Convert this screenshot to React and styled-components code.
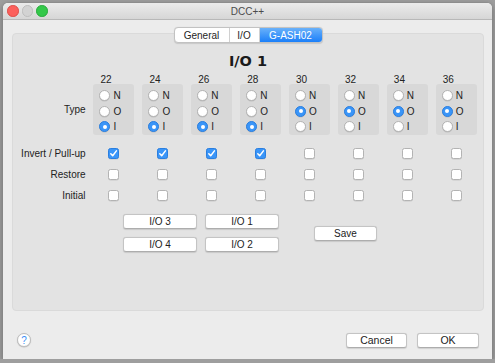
import React from "react";
import styled, { createGlobalStyle } from "styled-components";

const GlobalStyle = createGlobalStyle`
  html, body {
    margin: 0;
    padding: 0;
    background: #9e9e9e;
    font-family: "Liberation Sans", Arial, sans-serif;
    color: #222;
  }
`;

const columns = [
  { pin: 22, type: "I", invert: true },
  { pin: 24, type: "I", invert: true },
  { pin: 26, type: "I", invert: true },
  { pin: 28, type: "I", invert: true },
  { pin: 30, type: "O", invert: false },
  { pin: 32, type: "O", invert: false },
  { pin: 34, type: "O", invert: false },
  { pin: 36, type: "O", invert: false },
];

const App = () => {
  return (
    <>
      <GlobalStyle />
      <Window>
        <TitleBar>
          <Lights>
            <Light $color="#fc605c" $border="#de4a45" />
            <Light $color="#d3d3d3" $border="#bdbdbd" />
            <Light $color="#34c84a" $border="#24a938" />
          </Lights>
          <Title>DCC++</Title>
          <span />
        </TitleBar>

        <Body>
          <TabRow>
            <Segmented>
              <Segment $w={54}>General</Segment>
              <Segment $w={29}>I/O</Segment>
              <Segment $w={62} $active>
                G-ASH02
              </Segment>
            </Segmented>
          </TabRow>

          <GroupBox>
            <Heading>I/O 1</Heading>

            <Row $h={9}>
              <span />
              {columns.map((c) => (
                <PinNumber key={c.pin}>{c.pin}</PinNumber>
              ))}
            </Row>

            <Row $h={51}>
              <Label>Type</Label>
              {columns.map((c) => (
                <RadioBox key={c.pin}>
                  {["N", "O", "I"].map((opt) => (
                    <RadioItem key={opt}>
                      <Radio $on={c.type === opt} />
                      <span>{opt}</span>
                    </RadioItem>
                  ))}
                </RadioBox>
              ))}
            </Row>

            <Row $h={21} $mt={8}>
              <Label>Invert / Pull-up</Label>
              {columns.map((c) => (
                <CheckCell key={c.pin}>
                  <Check $on={c.invert}>
                    {c.invert && (
                      <svg width="9" height="9" viewBox="0 0 9 9">
                        <path
                          d="M1.8 4.8 L3.7 6.8 L7.4 1.9"
                          fill="none"
                          stroke="#fff"
                          strokeWidth="1.5"
                          strokeLinecap="round"
                          strokeLinejoin="round"
                        />
                      </svg>
                    )}
                  </Check>
                </CheckCell>
              ))}
            </Row>

            <Row $h={21}>
              <Label>Restore</Label>
              {columns.map((c) => (
                <CheckCell key={c.pin}>
                  <Check />
                </CheckCell>
              ))}
            </Row>

            <Row $h={21}>
              <Label>Initial</Label>
              {columns.map((c) => (
                <CheckCell key={c.pin}>
                  <Check />
                </CheckCell>
              ))}
            </Row>

            <Actions>
              <ButtonGrid>
                <PushButton $w={74}>I/O 3</PushButton>
                <PushButton $w={74}>I/O 1</PushButton>
                <PushButton $w={74}>I/O 4</PushButton>
                <PushButton $w={74}>I/O 2</PushButton>
              </ButtonGrid>
              <PushButton $w={63}>Save</PushButton>
            </Actions>
          </GroupBox>

          <Footer>
            <HelpButton>?</HelpButton>
            <FooterButtons>
              <PushButton $w={61} $big>
                Cancel
              </PushButton>
              <PushButton $w={62} $big>
                OK
              </PushButton>
            </FooterButtons>
          </Footer>
        </Body>
      </Window>
    </>
  );
};

// Styled Components
const Window = styled.div`
  margin: 3px 0 0 3px;
  width: 489px;
  height: 356px;
  background: #ececec;
  border-radius: 5px 5px 0 0;
  box-shadow: 0 0 0 0.5px #8a8a8a, 0 2px 6px rgba(0, 0, 0, 0.35);
  display: flex;
  flex-direction: column;
  overflow: hidden;
`;

const TitleBar = styled.div`
  height: 16px;
  display: grid;
  grid-template-columns: 1fr auto 1fr;
  align-items: center;
  background: linear-gradient(#ebebeb, #d6d6d6);
  border-bottom: 1px solid #b8b8b8;
`;

const Lights = styled.div`
  display: flex;
  gap: 3px;
  padding-left: 4px;
`;

const Light = styled.span`
  width: 11.5px;
  height: 11.5px;
  border-radius: 50%;
  box-sizing: border-box;
  background: ${(p) => p.$color};
  border: 0.5px solid ${(p) => p.$border};
`;

const Title = styled.div`
  font-size: 10px;
  color: #4b4b4b;
`;

const Body = styled.div`
  padding: 0 8px 0 9px;
  display: flex;
  flex-direction: column;
`;

const TabRow = styled.div`
  margin-top: 7px;
  display: flex;
  justify-content: center;
  position: relative;
  z-index: 1;
`;

const Segmented = styled.div`
  display: flex;
  height: 16px;
  box-sizing: border-box;
  border: 1px solid #c2c2c2;
  border-radius: 4px;
  background: #fff;
  overflow: hidden;
  box-shadow: 0 0.5px 1px rgba(0, 0, 0, 0.12);
`;

const Segment = styled.div`
  width: ${(p) => p.$w}px;
  display: flex;
  align-items: center;
  justify-content: center;
  font-size: 10px;
  color: ${(p) => (p.$active ? "#fff" : "#262626")};
  background: ${(p) =>
    p.$active ? "linear-gradient(#69b1fa, #1b7ff9)" : "transparent"};
  & + & {
    border-left: 1px solid #d0d0d0;
  }
`;

const GroupBox = styled.div`
  margin-top: -10px;
  height: 278px;
  box-sizing: border-box;
  padding-top: 19px;
  background: #e3e3e3;
  border: 1px solid #dadada;
  border-radius: 4px;
  display: flex;
  flex-direction: column;
`;

const Heading = styled.div`
  font-family: "DejaVu Sans", Verdana, sans-serif;
  font-weight: bold;
  font-size: 14.5px;
  line-height: 17px;
  text-align: center;
  color: #1a1a1a;
  margin-bottom: 5px;
`;

const Row = styled.div`
  display: grid;
  grid-template-columns: 72.6px repeat(8, 41px);
  column-gap: 7.9px;
  height: ${(p) => p.$h}px;
  margin-top: ${(p) => p.$mt || 0}px;
  align-items: center;
`;

const Label = styled.div`
  font-size: 10px;
  text-align: right;
  white-space: nowrap;
  color: #222;
`;

const PinNumber = styled.div`
  font-size: 10px;
  line-height: 9px;
  padding-left: 7px;
  color: #222;
`;

const RadioBox = styled.div`
  height: 51px;
  box-sizing: border-box;
  padding: 6px 0 0 6px;
  background: #d8d8d8;
  border-radius: 3px;
  display: flex;
  flex-direction: column;
  gap: 4.6px;
`;

const RadioItem = styled.div`
  display: flex;
  align-items: center;
  gap: 3px;
  height: 11px;
  font-size: 10px;
  color: #222;
`;

const Radio = styled.span`
  width: 11px;
  height: 11px;
  box-sizing: border-box;
  border-radius: 50%;
  display: flex;
  align-items: center;
  justify-content: center;
  background: ${(p) => (p.$on ? "#3a95f8" : "#fff")};
  border: 0.5px solid ${(p) => (p.$on ? "#2a7fe0" : "#b3b3b3")};
  box-shadow: 0 0.5px 0.5px rgba(0, 0, 0, 0.12);
  &::after {
    content: "";
    display: ${(p) => (p.$on ? "block" : "none")};
    width: 4px;
    height: 4px;
    border-radius: 50%;
    background: #fff;
  }
`;

const CheckCell = styled.div`
  display: flex;
  justify-content: center;
`;

const Check = styled.span`
  width: 11px;
  height: 11px;
  box-sizing: border-box;
  border-radius: 2.5px;
  display: flex;
  align-items: center;
  justify-content: center;
  background: ${(p) => (p.$on ? "#3a95f8" : "#fff")};
  border: 0.5px solid ${(p) => (p.$on ? "#2a7fe0" : "#b3b3b3")};
  box-shadow: 0 0.5px 0.5px rgba(0, 0, 0, 0.12);
`;

const Actions = styled.div`
  margin-top: 8px;
  padding-left: 4px;
  display: flex;
  justify-content: center;
  align-items: center;
  gap: 35px;
`;

const ButtonGrid = styled.div`
  display: grid;
  grid-template-columns: repeat(2, auto);
  gap: 8px;
`;

const PushButton = styled.div`
  width: ${(p) => p.$w}px;
  height: 15px;
  box-sizing: border-box;
  display: flex;
  align-items: center;
  justify-content: center;
  background: #fff;
  border: 0.5px solid #c4c4c4;
  border-bottom-color: #adadad;
  border-radius: 3px;
  box-shadow: 0 0.5px 1px rgba(0, 0, 0, 0.12);
  font-size: ${(p) => (p.$big ? 10.5 : 10)}px;
  color: #222;
`;

const Footer = styled.div`
  margin-top: 16px;
  height: 26px;
  padding: 0 5px;
  display: flex;
  align-items: center;
  justify-content: space-between;
`;

const HelpButton = styled.div`
  width: 14px;
  height: 14px;
  box-sizing: border-box;
  border-radius: 50%;
  background: #fff;
  border: 0.5px solid #bdbdbd;
  box-shadow: 0 0.5px 1px rgba(0, 0, 0, 0.2);
  display: flex;
  align-items: center;
  justify-content: center;
  font-size: 10px;
  color: #3b8ff5;
`;

const FooterButtons = styled.div`
  display: flex;
  gap: 10px;
`;

export default App;
